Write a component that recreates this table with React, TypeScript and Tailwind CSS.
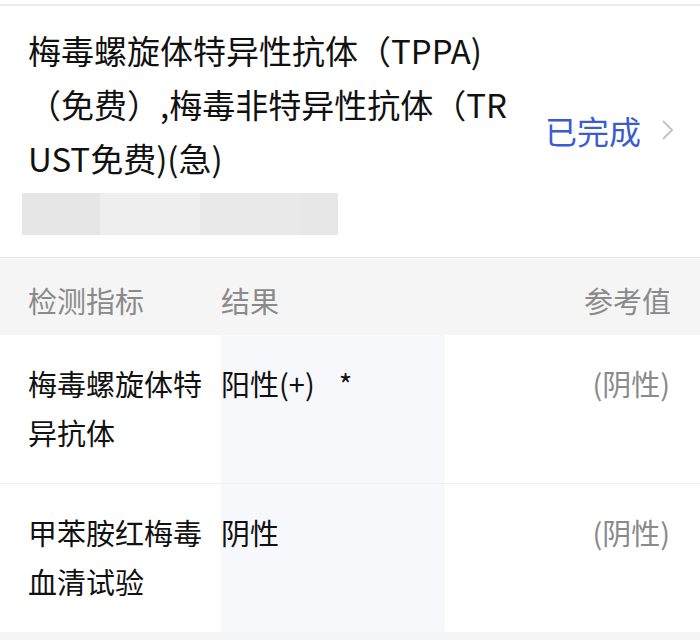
import React from "react";

const rows = [
  { name: "梅毒螺旋体特异抗体", result: "阳性(+)", star: true, ref: "(阴性)" },
  { name: "甲苯胺红梅毒血清试验", result: "阴性", star: false, ref: "(阴性)" },
];

export default function App() {
  return (
    <div
      className="w-[700px] h-[640px] bg-white overflow-hidden flex flex-col"
      style={{ fontFamily: '"Noto Sans CJK SC", "Noto Sans", sans-serif' }}
    >
      <div className="h-[4px] bg-white" />
      <div className="h-[2px] bg-[#ececec]" />
      {/* title section */}
      <div className="flex items-center h-[251px]">
        <div className="self-start pl-[28px] pt-[17px] flex flex-col w-[520px]">
          <div className="w-[490px] text-[33px] leading-[54px] text-[#111] break-all">
            梅毒螺旋体特异性抗体（TPPA)（免费）,梅毒非特异性抗体（TRUST免费)(急)
          </div>
          <div className="mt-[8px] -ml-[6px] flex h-[42px] w-[316px]">
            <div className="w-[78px] bg-[#e6e6e6]" />
            <div className="w-[100px] bg-[#eeeeee]" />
            <div className="w-[100px] bg-[#e9e9e9]" />
            <div className="w-[38px] bg-[#e7e7e7]" />
          </div>
        </div>
        <div className="flex items-center ml-[25px] -mt-[3px]">
          <span className="text-[32px] text-[#3b5bd1]">已完成</span>
          <svg width="14" height="22" viewBox="0 0 14 22" className="ml-[20px]">
            <path d="M2 2 L11 11 L2 20" fill="none" stroke="#c4c4c4" strokeWidth="2" />
          </svg>
        </div>
      </div>
      <div className="h-[1px] bg-[#e8e8e8]" />
      {/* header */}
      <div className="flex h-[77px] pt-[8px] bg-[#f5f5f5] items-center text-[29px] text-[#8a8a8a]">
        <div className="w-[221px] pl-[28px]">检测指标</div>
        <div className="w-[224px]">结果</div>
        <div className="flex-1 text-right pr-[29px]">参考值</div>
      </div>
      {rows.map((r, i) => (
        <div key={i} className="flex flex-col">
          <div className="flex h-[148px] text-[29px] leading-[49px]">
            <div className="w-[221px] pl-[28px] py-[24px] text-[#111] break-all">{r.name}</div>
            <div className="w-[224px] py-[24px] bg-[#f7f8fc] text-[#111]">
              {r.result}
              {r.star && <span className="ml-[24px]">*</span>}
            </div>
            <div className="flex-1 py-[24px] text-right pr-[30px] text-[#8a8a8a]">{r.ref}</div>
          </div>
          {i === 0 && <div className="h-[1px] bg-[#f0f0f0]" />}
        </div>
      ))}
      <div className="flex-1 bg-[#f5f5f5]" />
    </div>
  );
}
